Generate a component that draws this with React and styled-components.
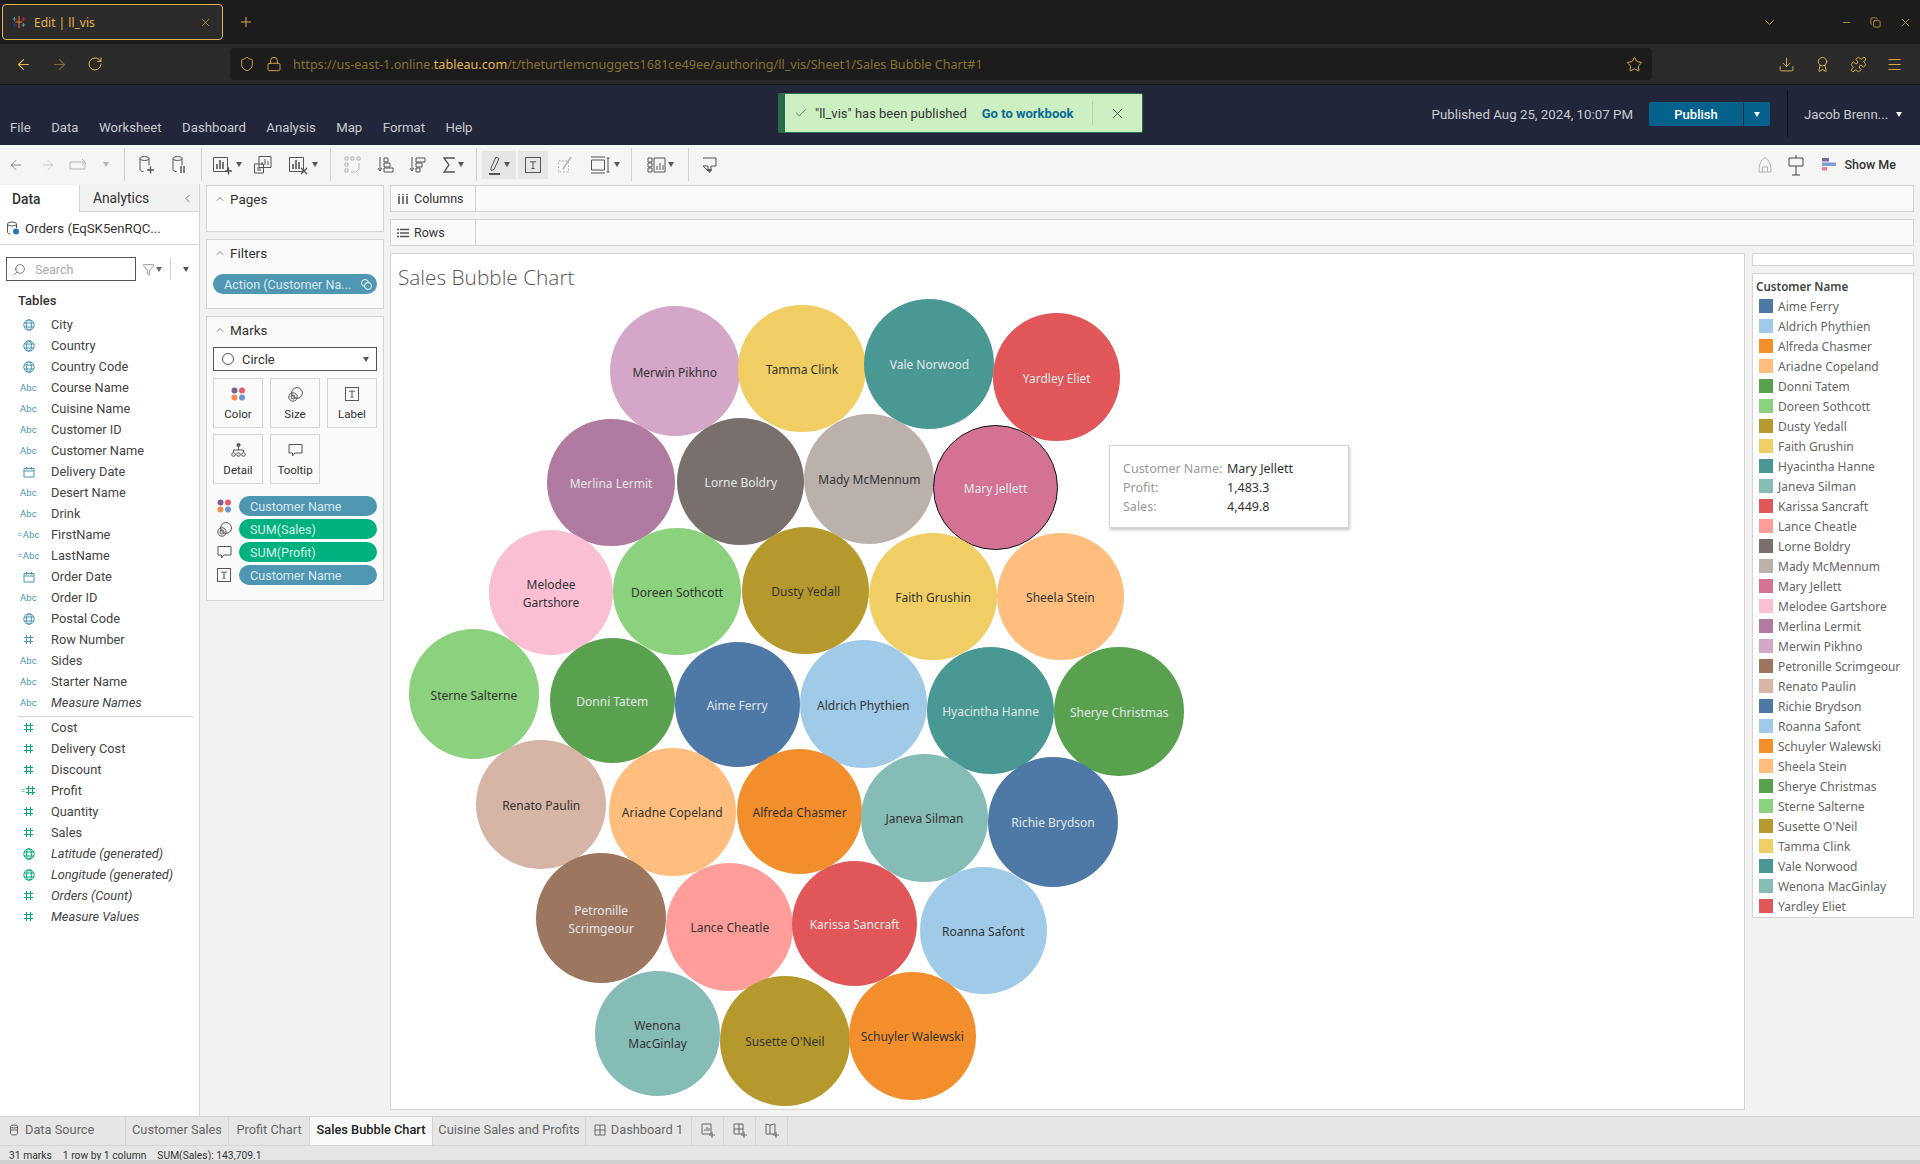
import React from 'react';
import styled, { createGlobalStyle } from 'styled-components';
import { ArrowLeft, ArrowRight, RotateCw, Shield, Lock, Star, Download, X, Plus, ChevronDown, ChevronUp, ChevronLeft, Minus, Copy, Menu, Puzzle, Check, Search as SearchIcon, Filter, Award } from 'lucide-react';

const AMBER = '#e6b44c';
const UI_FONT = 'Roboto, "Liberation Sans", sans-serif';
const VIZ_FONT = '"Noto Sans", "Open Sans", sans-serif';

const GlobalStyle = createGlobalStyle`
  html, body { margin: 0; padding: 0; background: #f2f2f2; }
  body { font-family: ${UI_FONT}; overflow: hidden; }
  * { box-sizing: border-box; }
`;

const COLORS = ['#4e79a7', '#a0cbe8', '#f28e2b', '#ffbe7d', '#59a14f', '#8cd17d', '#b6992d', '#f1ce63', '#499894', '#86bcb6', '#e15759', '#ff9d9a', '#79706e', '#bab0ac', '#d37295', '#fabfd2', '#b07aa1', '#d4a6c8', '#9d7660', '#d7b5a6'];

const LEGEND = ['Aime Ferry', 'Aldrich Phythien', 'Alfreda Chasmer', 'Ariadne Copeland', 'Donni Tatem', 'Doreen Sothcott', 'Dusty Yedall', 'Faith Grushin', 'Hyacintha Hanne', 'Janeva Silman', 'Karissa Sancraft', 'Lance Cheatle', 'Lorne Boldry', 'Mady McMennum', 'Mary Jellett', 'Melodee Gartshore', 'Merlina Lermit', 'Merwin Pikhno', 'Petronille Scrimgeour', 'Renato Paulin', 'Richie Brydson', 'Roanna Safont', 'Schuyler Walewski', 'Sheela Stein', 'Sherye Christmas', 'Sterne Salterne', "Susette O'Neil", 'Tamma Clink', 'Vale Norwood', 'Wenona MacGinlay', 'Yardley Eliet'];

// these three labels break over two lines in the chart
const TWO_LINES = ['Melodee Gartshore', 'Petronille Scrimgeour', 'Wenona MacGinlay'];

// centre x, centre y, radius, in page pixels of the shrunk reference
const BUBBLES = [
  ['Merwin Pikhno', 551, 303, 53, 0], ['Tamma Clink', 655, 301, 52, 0], ['Vale Norwood', 759, 297, 53, 1], ['Yardley Eliet', 863, 308, 52, 1],
  ['Merlina Lermit', 499, 394, 52, 1], ['Lorne Boldry', 605, 393, 52, 1], ['Mady McMennum', 710, 391, 53, 0], ['Mary Jellett', 813, 398, 51, 1],
  ['Melodee Gartshore', 450, 484, 51, 0], ['Doreen Sothcott', 553, 483, 52, 0], ['Dusty Yedall', 658, 482, 52, 0], ['Faith Grushin', 762, 487, 52, 0], ['Sheela Stein', 866, 487, 52, 0],
  ['Sterne Salterne', 387, 567, 53, 0], ['Donni Tatem', 500, 572, 51, 1], ['Aime Ferry', 602, 575, 51, 1], ['Aldrich Phythien', 705, 575, 52, 0], ['Hyacintha Hanne', 809, 580, 52, 1], ['Sherye Christmas', 914, 581, 53, 1],
  ['Renato Paulin', 442, 657, 53, 0], ['Ariadne Copeland', 549, 663, 52, 0], ['Alfreda Chasmer', 653, 663, 51, 0], ['Janeva Silman', 755, 668, 52, 0], ['Richie Brydson', 860, 671, 53, 1],
  ['Petronille Scrimgeour', 491, 750, 53, 1], ['Lance Cheatle', 596, 757, 52, 0], ['Karissa Sancraft', 698, 754, 51, 1], ['Roanna Safont', 803, 760, 52, 0],
  ['Wenona MacGinlay', 537, 844, 51, 0], ["Susette O'Neil", 641, 850, 53, 0], ['Schuyler Walewski', 745, 846, 52, 0],
];

const DIMS = [
  ['geo', 'City'], ['geo', 'Country'], ['geo', 'Country Code'], ['abc', 'Course Name'], ['abc', 'Cuisine Name'], ['abc', 'Customer ID'], ['abc', 'Customer Name'],
  ['date', 'Delivery Date'], ['abc', 'Desert Name'], ['abc', 'Drink'], ['calcabc', 'FirstName'], ['calcabc', 'LastName'], ['date', 'Order Date'], ['abc', 'Order ID'],
  ['geo', 'Postal Code'], ['hash', 'Row Number'], ['abc', 'Sides'], ['abc', 'Starter Name'], ['abc', 'Measure Names', true],
];
const MEASURES = [
  ['hash', 'Cost'], ['hash', 'Delivery Cost'], ['hash', 'Discount'], ['calchash', 'Profit'], ['hash', 'Quantity'], ['hash', 'Sales'],
  ['geo', 'Latitude (generated)', true], ['geo', 'Longitude (generated)', true], ['hash', 'Orders (Count)', true], ['hash', 'Measure Values', true],
];

/* ---------- browser chrome ---------- */
const TabStrip = styled.div`
  height: 44px; background: #1c1c1c; display: flex; align-items: center; padding: 0 0 0 2px; color: ${AMBER};
`;
const BrowserTab = styled.div`
  width: 221px; height: 36px; border: 1px solid ${AMBER}; border-radius: 4px; background: #2b2b2b;
  display: flex; align-items: center; padding: 0 10px 0 8px; font: 12px ${VIZ_FONT}; gap: 7px; color: ${AMBER};
  span { flex: 1; }
`;
const NewTab = styled.div` margin-left: 15px; display: flex; `;
const WindowControls = styled.div`
  margin-left: auto; display: flex; align-items: center; padding-right: 8px;
`;
const WinIcon = styled.span` display: flex; margin-left: ${p => p.$ml}px; `;
const NavBar = styled.div`
  height: 41px; background: #2b2b2b; display: flex; align-items: center; padding: 0 0 0 15px; color: ${AMBER}; border-bottom: 1px solid #111;
`;
const NavIcon = styled.span` display: flex; margin-left: ${p => p.$ml || 0}px; opacity: ${p => p.$dim ? 0.45 : 1}; `;
const UrlBar = styled.div`
  margin-left: 127px; width: 1422px; height: 32px; background: #1c1c1c; border-radius: 4px; display: flex; align-items: center; padding: 0 9px; color: ${AMBER};
`;
const UrlText = styled.div`
  margin-left: 11px; flex: 1; font: 12.6px ${VIZ_FONT}; color: #86712f; white-space: nowrap; overflow: hidden;
  b { font-weight: 400; color: ${AMBER}; }
`;

/* ---------- tableau header ---------- */
const AppHeader = styled.div`
  position: relative; height: 60px; background: #22263a; display: flex; align-items: flex-end; color: #d0d0d6;
`;
const MenuBar = styled.div`
  display: flex; gap: 20.5px; padding: 0 0 8px 10px; font-size: 13.2px; line-height: 18px; color: #c9cbd2;
`;
const Toast = styled.div`
  position: absolute; left: 778px; top: 8px; width: 365px; height: 40px; background: #ccf0c2; border: 1px solid #2a6b4a; border-left-width: 7px; border-radius: 2px;
  display: flex; align-items: center; padding-left: 9px; font-size: 13px; color: #333;
`;
const ToastText = styled.span` margin-left: 7px; `;
const ToastLink = styled.span` margin-left: 15px; color: #0a6a95; font-weight: 700; `;
const ToastClose = styled.span`
  margin-left: 18px; padding-left: 16px; border-left: 1px solid #b5d4ad; height: 24px; display: flex; align-items: center; color: #444;
`;
const HeaderRight = styled.div`
  margin-left: auto; height: 60px; display: flex; align-items: center; padding-bottom: 2px;
`;
const PublishedText = styled.div` font-size: 13.3px; color: #c9cbd2; margin-right: 16px; `;
const PublishBtn = styled.div`
  width: 121px; height: 24px; background: #05628d; border-radius: 2px; display: flex; align-items: center; color: #fff; font-size: 13px; font-weight: 500;
`;
const PublishLabel = styled.div` width: 94px; text-align: center; `;
const PublishCaret = styled.div`
  flex: 1; border-left: 1px solid #22263a; height: 24px; display: flex; align-items: center; justify-content: center;
`;
const Tri = styled.span`
  display: inline-block; flex: none; width: 0; height: 0; border-left: 3.5px solid transparent; border-right: 3.5px solid transparent; border-top: 5px solid ${p => p.$c || '#fff'};
`;
const UserBox = styled.div`
  margin-left: 17px; width: 133px; height: 46px; border-left: 1px solid #111; display: flex; align-items: center; padding-left: 16px; gap: 8px; font-size: 13.2px; color: #c9cbd2;
`;

/* ---------- toolbar ---------- */
const Toolbar = styled.div`
  height: 39px; background: #f5f5f5; display: flex; align-items: center; padding-left: 2px; color: #555;
`;
const ToolBtn = styled.div`
  flex: none; width: ${p => p.$w || 32}px; height: 28px; display: flex; align-items: center; justify-content: center; gap: 2px;
  background: ${p => p.$active ? '#e6e6e6' : 'transparent'};
  opacity: ${p => p.$dim ? 0.4 : 1}; margin-right: ${p => p.$mr || 0}px;
`;
const ToolSep = styled.div` flex: none; width: 1px; height: 33px; background: #d4d4d4; margin: 0 5px; `;
const ShowMe = styled.div`
  margin-left: auto; display: flex; align-items: center; padding-right: 24px; font-size: 12.5px; font-weight: 500; color: #333;
`;
const ShowMeBars = styled.svg` margin-right: 6px; `;

/* ---------- workspace ---------- */
const Workspace = styled.div` flex: 1; display: flex; min-height: 0; background: #f2f2f2; `;
const Sidebar = styled.div` width: 200px; background: #fff; border-right: 1px solid #d4d4d4; display: flex; flex-direction: column; `;
const PaneTabs = styled.div` height: 28px; display: flex; background: #f2f2f2; font-size: 13.8px; color: #333; border-top: 1px solid #f2f2f2; `;
const PaneTab = styled.div`
  width: ${p => p.$w}px; display: flex; align-items: center; padding-left: ${p => p.$pl}px; font-weight: ${p => p.$on ? 500 : 400};
  background: ${p => p.$on ? '#fff' : '#f2f2f2'};
  border-bottom: ${p => p.$on ? 'none' : '1px solid #d4d4d4'};
  border-left: ${p => p.$on ? 'none' : '1px solid #d4d4d4'};
  flex: ${p => p.$on ? 'none' : 1};
  justify-content: space-between; padding-right: 5px;
`;
const SourceRow = styled.div`
  height: 33px; border-bottom: 1px solid #d4d4d4; display: flex; align-items: center; padding-left: 6px; gap: 5px; font-size: 13.2px; color: #333;
`;
const SearchRow = styled.div` display: flex; align-items: center; padding: 12px 0 0 6px; color: #555; `;
const SearchBox = styled.div`
  width: 130px; height: 24px; border: 1px solid #555; display: flex; align-items: center; padding-left: 6px; gap: 9px; font-size: 12.5px; color: #aaa;
`;
const SearchTools = styled.div` display: flex; align-items: center; margin-left: 6px; gap: 1px; `;
const SearchSep = styled.div` width: 1px; height: 22px; background: #d4d4d4; margin: 0 11px 0 7px; `;
const TablesTitle = styled.div` padding-left: 18px; margin-top: 10px; font-size: 13px; font-weight: 500; line-height: 20px; color: #333; `;
const FieldList = styled.div` margin-top: 3px; display: flex; flex-direction: column; `;
const FieldRow = styled.div`
  height: 21px; display: flex; align-items: center; padding-left: 18px; font-size: 12.8px; color: #444; font-style: ${p => p.$it ? 'italic' : 'normal'};
  white-space: nowrap;
`;
const FieldGlyph = styled.span`
  width: 21px; margin-right: 12px; display: flex; align-items: center; justify-content: center; font-size: 9.5px; font-style: normal; color: #4996b2; letter-spacing: .2px;
`;
const CalcMark = styled.span` font-size: 8px; color: ${p => p.$c}; `;
const FieldDivider = styled.div` margin: 3px 6px 0 18px; height: 1px; background: #d4d4d4; `;

/* ---------- cards ---------- */
const CardColumn = styled.div` width: 190px; padding: 1px 6px 0; display: flex; flex-direction: column; gap: 7px; `;
const Card = styled.div`
  height: ${p => p.$h}px; background: #fafafa; border: 1px solid #d4d4d4; padding: 0 6px;
`;
const CardTitle = styled.div`
  height: 26px; display: flex; align-items: center; gap: 4px; font-size: 13.5px; color: #333; padding-left: 1px;
`;
const Pill = styled.div`
  flex: 1; height: 20px; border-radius: 10px; background: ${p => p.$green ? '#00b180' : '#4f96b3'}; color: ${p => p.$green ? '#d5f2e8' : '#d8eaf0'}; font-size: 12.6px; padding: 0 5px 0 11px;
  display: flex; align-items: center; justify-content: space-between; white-space: nowrap;
`;
const FilterPillWrap = styled.div` margin-top: 8px; display: flex; `;
const MarkSelect = styled.div`
  margin-top: 4px; height: 24px; background: #fff; border: 1px solid #555; display: flex; align-items: center; padding: 0 7px 0 8px; gap: 8px; font-size: 13px; color: #333;
`;
const MarkRing = styled.div` width: 12px; height: 12px; border: 1px solid #555; border-radius: 50%; `;
const MarkName = styled.div` flex: 1; `;
const MarkGrid = styled.div` margin-top: 7px; display: grid; grid-template-columns: repeat(3, 50px); gap: 6px 7px; `;
const MarkBtn = styled.div`
  height: 50px; background: #fafafa; border: 1px solid #d4d4d4; display: flex; flex-direction: column; align-items: center; justify-content: space-between; padding: 8px 0 6px; font-size: 11.5px; color: #333;
`;
const ShelfList = styled.div` margin-top: 12px; display: flex; flex-direction: column; gap: 3px; `;
const ShelfRow = styled.div` display: flex; align-items: center; `;
const ShelfGlyph = styled.span` width: 26px; display: flex; justify-content: flex-start; padding-left: 4px; color: #555; `;

/* ---------- main ---------- */
const Main = styled.div` flex: 1; min-width: 0; padding: 1px 6px 6px 0; display: flex; flex-direction: column; gap: 7px; `;
const Shelf = styled.div` height: 27px; background: #fafafa; border: 1px solid #d4d4d4; display: flex; `;
const ShelfLabel = styled.div`
  width: 85px; border-right: 1px solid #d4d4d4; display: flex; align-items: center; padding-left: 6px; gap: 5px; font-size: 12.5px; color: #333;
`;
const VizRow = styled.div` flex: 1; min-height: 0; display: flex; gap: 7px; `;
const Canvas = styled.div` position: relative; flex: 1; background: #fff; border: 1px solid #d4d4d4; overflow: hidden; `;
const SheetTitle = styled.div`
  padding: 10px 0 0 7px; font: 300 20.8px/26px "Open Sans", sans-serif; color: #555;
`;
const Bubble = styled.div`
  position: absolute; border-radius: 50%; display: flex; align-items: center; justify-content: center; text-align: center;
  padding-top: 3px; font: 12px/18px ${VIZ_FONT}; white-space: pre; color: ${p => p.$light ? '#e2e8e8' : '#333'};
  border: ${p => p.$sel ? '1.5px solid #111' : 'none'};
`;
const Tip = styled.div`
  position: absolute; left: 718px; top: 191px; width: 240px; height: 83px; background: #fff; border: 1px solid #d4d4d4; box-shadow: 1px 2px 3px rgba(0,0,0,.22);
  padding: 13px; display: grid; grid-template-columns: 104px 1fr; grid-auto-rows: 19px; align-items: center; font: 12.5px ${VIZ_FONT}; color: #333;
`;
const TipLabel = styled.div` color: #999; `;
const LegendCol = styled.div` width: 162px; display: flex; flex-direction: column; gap: 7px; `;
const LegendTop = styled.div` height: 13px; background: #fff; border: 1px solid #d4d4d4; `;
const LegendBox = styled.div` height: 645px; background: #fff; border: 1px solid #d4d4d4; padding: 3px 0 0 3px; font-family: ${VIZ_FONT}; `;
const LegendTitle = styled.div` height: 20px; font-size: 11.6px; font-weight: 600; line-height: 20px; color: #444; margin-bottom: -1px; `;
const LegendRow = styled.div` height: 20px; display: flex; align-items: center; padding-left: 3px; gap: 5px; font-size: 12px; color: #666; white-space: nowrap; `;
const Swatch = styled.i` width: 14px; height: 14px; background: ${p => p.$c}; `;

/* ---------- bottom ---------- */
const SheetTabs = styled.div` height: 30px; background: #e6e6e6; border-top: 1px solid #d4d4d4; border-bottom: 1px solid #d4d4d4; display: flex; `;
const SheetTab = styled.div`
  width: ${p => p.$w}px; display: flex; align-items: center; justify-content: ${p => p.$left ? 'flex-start' : 'center'}; gap: 5px; font-size: 12.8px; white-space: nowrap;
  padding: 0 0 3px ${p => p.$left ? 8 : 0}px;
  color: ${p => p.$on ? '#222' : '#666'}; font-weight: ${p => p.$on ? 500 : 400};
  background: ${p => p.$on ? '#fafafa' : 'transparent'}; border-right: 1px solid #d4d4d4;
`;
const StatusBar = styled.div`
  height: 14px; background: #e6e6e6; display: flex; align-items: center; padding: 4px 0 0 9px; gap: 11px; font-size: 10.3px; color: #333;
`;
const StatusEdge = styled.div` height: 4px; background: #cfcfcf; `;
const Page = styled.div` width: 1920px; height: 1164px; display: flex; flex-direction: column; overflow: hidden; `;

/* ---------- drawings ---------- */
const Svg = ({ s = 16, w, h, children, c = 'currentColor', sw = 1 }) => (
  <svg width={w || s} height={h || s} viewBox={`0 0 ${w || s} ${h || s}`} fill="none" stroke={c} strokeWidth={sw}>{children}</svg>
);

const TabLogo = () => (
  <svg width="16" height="16" viewBox="0 0 16 16" strokeWidth="1.1" fill="none">
    <path d="M8 2v12M4.500 8h7" stroke="#e8762b" />
    <path d="M3.500 3v4M1.500 5h4" stroke="#5b879b" />
    <path d="M12.500 3v4M10.500 5h4" stroke="#c72035" />
    <path d="M3.500 9v4M1.500 11h4" stroke="#1f447e" />
    <path d="M12.500 9v4M10.500 11h4" stroke="#59879b" />
  </svg>
);
const Cyl = ({ children }) => (
  <Svg s={20} c="#555"><ellipse cx="7.500" cy="3.500" rx="4.500" ry="2" /><path d="M3 3.500v11c0 1 1.500 2 3.500 2M12 3.500v7" />{children}</Svg>
);
const Chart = ({ children }) => (
  <Svg s={22} c="#555"><path d="M1.500 3.500h14v14h-14z" /><path d="M5 15V10M8 15V6M11 15V8" strokeWidth="1.600" />{children}</Svg>
);
const TBox = ({ s = 16 }) => (
  <Svg s={s} c="#555"><rect x=".5" y=".5" width={s - 1} height={s - 1} /><path d={`M${s * .3} ${s * .3}h${s * .4}M${s / 2} ${s * .3}v${s * .42}M${s * .4} ${s * .72}h${s * .2}`} /></Svg>
);
const ColorDots = () => (
  <svg width="15" height="14" viewBox="0 0 15 14"><circle cx="3.500" cy="3.500" r="3" fill="#7b6193" /><circle cx="11" cy="3.500" r="3" fill="#ea5a6b" /><circle cx="3.500" cy="10.500" r="3" fill="#f28e4f" /><circle cx="11" cy="10.500" r="3" fill="#6f96cf" /></svg>
);
const SizeIcon = () => (
  <Svg s={15} c="#555"><circle cx="9" cy="6" r="5.400" /><circle cx="5" cy="10" r="4.200" /><circle cx="5" cy="10" r="2" /></Svg>
);
const BubbleIcon = () => (
  <Svg s={15} c="#555"><path d="M1 1.500h13v8.500H7l-2.500 3V10H1z" /></Svg>
);
const DetailIcon = () => (
  <Svg s={15} c="#555"><circle cx="7.500" cy="2" r="1.600" fill="#555" /><path d="M7.500 4v3M2.500 9V7h10v2" /><circle cx="2.500" cy="11.500" r="1.800" /><circle cx="7.500" cy="11.500" r="1.800" /><circle cx="12.500" cy="11.500" r="1.800" /></Svg>
);
const Globe = ({ c }) => (
  <Svg s={12} c={c}><circle cx="6" cy="6" r="5.200" /><ellipse cx="6" cy="6" rx="2.400" ry="5.200" /><path d="M1 4h10M1 8h10" /></Svg>
);
const Cal = () => (
  <Svg s={12} c="#4996b2"><path d="M1 2.500h10v8.500H1zM1 5h10M3.500 1v2.500M8.500 1v2.500" /></Svg>
);
const Hash = ({ c }) => (
  <Svg s={11} c={c}><path d="M3.500 1v9M7.500 1v9M1 3.500h9M1 7.500h9" /></Svg>
);

const fieldGlyph = (type, green) => {
  const c = green ? '#00a878' : '#4996b2';
  if (type === 'geo') return <Globe c={c} />;
  if (type === 'date') return <Cal />;
  if (type === 'hash') return <Hash c={c} />;
  if (type === 'calchash') return <><CalcMark $c={c}>=</CalcMark><Hash c={c} /></>;
  if (type === 'calcabc') return '=Abc';
  return 'Abc';
};

const Field = ({ item, green }) => (
  <FieldRow $it={item[2]}>
    <FieldGlyph>{fieldGlyph(item[0], green)}</FieldGlyph>
    {item[1]}
  </FieldRow>
);

const S = 1920 / 1568;
const CANVAS_X = 391;
const CANVAS_Y = 254;

function App() {
  return (
    <Page>
      <GlobalStyle />
      <TabStrip>
        <BrowserTab><TabLogo /><span>Edit | ll_vis</span><X size={13} strokeWidth={1.2} /></BrowserTab>
        <NewTab><Plus size={16} strokeWidth={1.4} /></NewTab>
        <WindowControls>
          <WinIcon><ChevronDown size={15} strokeWidth={1.4} /></WinIcon>
          <WinIcon $ml={64}><Minus size={11} strokeWidth={1.5} /></WinIcon>
          <WinIcon $ml={18}><Copy size={11} strokeWidth={1.5} /></WinIcon>
          <WinIcon $ml={18}><X size={13} strokeWidth={1.3} /></WinIcon>
        </WindowControls>
      </TabStrip>

      <NavBar>
        <NavIcon><ArrowLeft size={17} strokeWidth={1.5} /></NavIcon>
        <NavIcon $ml={19} $dim><ArrowRight size={17} strokeWidth={1.5} /></NavIcon>
        <NavIcon $ml={19}><RotateCw size={16} strokeWidth={1.5} /></NavIcon>
        <UrlBar>
          <Shield size={16} strokeWidth={1.3} />
          <NavIcon $ml={11}><Lock size={16} strokeWidth={1.3} /></NavIcon>
          <UrlText>https://us-east-1.online.<b>tableau.com</b>/t/theturtlemcnuggets1681ce49ee/authoring/ll_vis/Sheet1/Sales Bubble Chart#1</UrlText>
          <Star size={17} strokeWidth={1.3} />
        </UrlBar>
        <NavIcon $ml={126}><Download size={17} strokeWidth={1.3} /></NavIcon>
        <NavIcon $ml={19}><Award size={17} strokeWidth={1.3} /></NavIcon>
        <NavIcon $ml={19}><Puzzle size={17} strokeWidth={1.3} /></NavIcon>
        <NavIcon $ml={19}><Menu size={17} strokeWidth={1.3} /></NavIcon>
      </NavBar>

      <AppHeader>
        <MenuBar>
          {['File', 'Data', 'Worksheet', 'Dashboard', 'Analysis', 'Map', 'Format', 'Help'].map(m => <span key={m}>{m}</span>)}
        </MenuBar>
        <Toast>
          <Check size={14} strokeWidth={1.3} color="#2a6b4a" />
          <ToastText>"ll_vis" has been published</ToastText>
          <ToastLink>Go to workbook</ToastLink>
          <ToastClose><X size={17} strokeWidth={1.2} /></ToastClose>
        </Toast>
        <HeaderRight>
          <PublishedText>Published Aug 25, 2024, 10:07 PM</PublishedText>
          <PublishBtn><PublishLabel>Publish</PublishLabel><PublishCaret><Tri /></PublishCaret></PublishBtn>
          <UserBox>Jacob Brenn...<Tri /></UserBox>
        </HeaderRight>
      </AppHeader>

      <Toolbar>
        <ToolBtn $w={28}><ArrowLeft size={16} strokeWidth={1} /></ToolBtn>
        <ToolBtn $w={36} $dim><ArrowRight size={16} strokeWidth={1} /></ToolBtn>
        <ToolBtn $w={26} $dim><Svg w={20} h={14} c="#555"><path d="M1 4h15v7H1zM13 1l3 3-3 3" /></Svg></ToolBtn>
        <ToolBtn $w={27} $dim><Tri $c="#555" /></ToolBtn>
        <ToolSep />
        <ToolBtn $w={34}><Cyl><path d="M10 15h7M13.500 11.500v7" strokeWidth="1.400" /></Cyl></ToolBtn>
        <ToolBtn $w={32}><Cyl><path d="M11 11v7M14 11v7" strokeWidth="1.400" /></Cyl></ToolBtn>
        <ToolSep />
        <ToolBtn $w={40}><Chart><path d="M13 17h7M16.500 13.500v7" strokeWidth="1.400" /></Chart><Tri $c="#555" /></ToolBtn>
        <ToolBtn $w={34}><Svg s={22} c="#555"><path d="M6 2.500h12v11H6zM9 11V8M12 11V5M15 11V7M1.500 10h9v9h-9zM4 16h4M4 14h4" /></Svg></ToolBtn>
        <ToolBtn $w={44}><Chart><path d="M13 14l6 6M19 14l-6 6" strokeWidth="1.400" /></Chart><Tri $c="#555" /></ToolBtn>
        <ToolSep />
        <ToolBtn $w={34} $dim><Svg s={20} c="#555"><path d="M2 2h3v3H2zM8 2h3v3H8zM14 2h3v3h-3zM2 8h3v3H2zM2 14h3v3H2zM16 8v6l-3 3M8 17h4" /></Svg></ToolBtn>
        <ToolBtn $w={31}><Svg s={20} c="#555"><path d="M4 2v14M2 13l2 3 2-3M8 3h4v4H8zM8 8h6v4H8zM8 13h9v4H8z" /></Svg></ToolBtn>
        <ToolBtn $w={33}><Svg s={20} c="#555"><path d="M4 2v14M2 13l2 3 2-3M8 3h9v4H8zM8 8h6v4H8zM8 13h4v4H8z" /></Svg></ToolBtn>
        <ToolBtn $w={37}><Svg w={14} h={18} c="#555" sw={1.3}><path d="M12 3V2H2l5 7-5 7h10v-1" /></Svg><Tri $c="#555" /></ToolBtn>
        <ToolSep />
        <ToolBtn $w={34} $active $mr={2}><Svg w={14} h={20} c="#555"><path d="M3 13L8 2l3 1.500-5 11-3 1z" /><path d="M1 19h11" strokeWidth="2" /></Svg><Tri $c="#555" /></ToolBtn>
        <ToolBtn $w={30} $active><TBox s={16} /></ToolBtn>
        <ToolBtn $w={36} $dim><Svg s={18} c="#555"><path d="M1.500 5h10v11h-10z" strokeDasharray="2 1.500" /><path d="M6 13L14 1" strokeWidth="1.500" /></Svg></ToolBtn>
        <ToolBtn $w={42}><Svg w={22} h={20} c="#555"><path d="M1 2h14M1 18h14M1.500 5h13v10h-13zM18 3v14M16.500 3h3M16.500 17h3" /></Svg><Tri $c="#555" /></ToolBtn>
        <ToolSep />
        <ToolBtn $w={46}><Svg s={20} c="#555"><path d="M2 3h4v4H2zM2 8h4v4H2zM2 13h4v4H2zM8 3h11v14H8zM11 15v-4M14 15V8M17 15v-5" /></Svg><Tri $c="#555" /></ToolBtn>
        <ToolSep />
        <ToolBtn $w={32}><Svg s={18} c="#555"><path d="M2 2h13v8H10v5M7 15V10H2z" /><path d="M6.500 13.500l2 3 2-3z" fill="#555" /></Svg></ToolBtn>
        <ShowMe>
          <ToolBtn $w={32} $dim><Svg s={18} c="#555"><path d="M9 1.500C6 3 3.500 7 3 13v3h12v-3c-.5-6-3-9.500-6-11.500zM6.500 16v-5h5v5" /></Svg></ToolBtn>
          <ToolBtn $w={30} $mr={11}><Svg w={18} h={22} c="#444"><path d="M2 4h14v8H2zM9 1v3M9 12v9M5 21h8" /></Svg></ToolBtn>
          <ShowMeBars width="16" height="16" viewBox="0 0 16 16">
            <rect x="0" y="1" width="7" height="3.500" fill="#7b6a9a" />
            <rect x="0" y="5.500" width="14" height="3.500" fill="#7f9fd6" />
            <rect x="0" y="10" width="5" height="3.500" fill="#f27f85" />
          </ShowMeBars>
          Show Me
        </ShowMe>
      </Toolbar>

      <Workspace>
        <Sidebar>
          <PaneTabs>
            <PaneTab $on $w={79} $pl={12}>Data</PaneTab>
            <PaneTab $w={120} $pl={13}>Analytics<ChevronLeft size={13} strokeWidth={1.2} /></PaneTab>
          </PaneTabs>
          <SourceRow>
            <Svg s={14} c="#555"><ellipse cx="6" cy="3" rx="4.500" ry="2" /><path d="M1.500 3v8c0 1 1 2 3 2M10.500 3v4" /><circle cx="10" cy="10.500" r="3" fill="#1f77b4" stroke="none" /></Svg>
            Orders (EqSK5enRQC...
          </SourceRow>
          <SearchRow>
            <SearchBox><SearchIcon size={13} strokeWidth={1.3} color="#444" style={{ transform: 'scaleX(-1)' }} />Search</SearchBox>
            <SearchTools>
              <Filter size={13} strokeWidth={1.1} /><Tri $c="#666" />
              <SearchSep />
              <Tri $c="#555" />
            </SearchTools>
          </SearchRow>
          <TablesTitle>Tables</TablesTitle>
          <FieldList>
            {DIMS.map(f => <Field key={f[1]} item={f} />)}
            <FieldDivider />
            {MEASURES.map(f => <Field key={f[1]} item={f} green />)}
          </FieldList>
        </Sidebar>

        <CardColumn>
          <Card $h={47}><CardTitle><ChevronUp size={12} strokeWidth={1.2} />Pages</CardTitle></Card>
          <Card $h={70}>
            <CardTitle><ChevronUp size={12} strokeWidth={1.2} />Filters</CardTitle>
            <FilterPillWrap>
              <Pill>Action (Customer Na...<Svg s={11} c="#fff"><circle cx="4" cy="4" r="3.500" /><circle cx="7" cy="7" r="3.500" fill="#4f96b3" /></Svg></Pill>
            </FilterPillWrap>
          </Card>
          <Card $h={285}>
            <CardTitle><ChevronUp size={12} strokeWidth={1.2} />Marks</CardTitle>
            <MarkSelect><MarkRing /><MarkName>Circle</MarkName><Tri $c="#555" /></MarkSelect>
            <MarkGrid>
              <MarkBtn><ColorDots />Color</MarkBtn>
              <MarkBtn><SizeIcon />Size</MarkBtn>
              <MarkBtn><TBox s={14} />Label</MarkBtn>
              <MarkBtn><DetailIcon />Detail</MarkBtn>
              <MarkBtn><BubbleIcon />Tooltip</MarkBtn>
            </MarkGrid>
            <ShelfList>
              <ShelfRow><ShelfGlyph><ColorDots /></ShelfGlyph><Pill>Customer Name</Pill></ShelfRow>
              <ShelfRow><ShelfGlyph><SizeIcon /></ShelfGlyph><Pill $green>SUM(Sales)</Pill></ShelfRow>
              <ShelfRow><ShelfGlyph><BubbleIcon /></ShelfGlyph><Pill $green>SUM(Profit)</Pill></ShelfRow>
              <ShelfRow><ShelfGlyph><TBox s={14} /></ShelfGlyph><Pill>Customer Name</Pill></ShelfRow>
            </ShelfList>
          </Card>
        </CardColumn>

        <Main>
          <Shelf>
            <ShelfLabel><Svg s={12} c="#555" sw={1.6}><path d="M2 3v8M6 3v8M10 3v8M2 1v1M6 1v1M10 1v1" /></Svg>Columns</ShelfLabel>
          </Shelf>
          <Shelf>
            <ShelfLabel><Svg s={12} c="#555" sw={1.4}><path d="M3 2.500h9M3 6h9M3 9.500h9M0 2.500h2M0 6h2M0 9.500h2" /></Svg>Rows</ShelfLabel>
          </Shelf>
          <VizRow>
            <Canvas>
              <SheetTitle>Sales Bubble Chart</SheetTitle>
              {BUBBLES.map(([name, x, y, r, light]) => (
                <Bubble
                  key={name}
                  $light={light}
                  $sel={name === 'Mary Jellett'}
                  style={{
                    left: x * S - r * S - CANVAS_X,
                    top: y * S - r * S - CANVAS_Y,
                    width: 2 * r * S,
                    height: 2 * r * S,
                    background: COLORS[LEGEND.indexOf(name) % COLORS.length],
                  }}
                >
                  {TWO_LINES.includes(name) ? name.replace(' ', '\n') : name}
                </Bubble>
              ))}
              <Tip>
                <TipLabel>Customer Name:</TipLabel><div>Mary Jellett</div>
                <TipLabel>Profit:</TipLabel><div>1,483.3</div>
                <TipLabel>Sales:</TipLabel><div>4,449.8</div>
              </Tip>
            </Canvas>
            <LegendCol>
              <LegendTop />
              <LegendBox>
                <LegendTitle>Customer Name</LegendTitle>
                {LEGEND.map((n, i) => (
                  <LegendRow key={n}><Swatch $c={COLORS[i % COLORS.length]} />{n}</LegendRow>
                ))}
              </LegendBox>
            </LegendCol>
          </VizRow>
        </Main>
      </Workspace>

      <SheetTabs>
        <SheetTab $w={126} $left><Svg s={12} c="#666"><ellipse cx="6" cy="2.500" rx="3.500" ry="1.500" /><path d="M2.500 2.500v7c0 2 7 2 7 0v-7M2.500 6h7" /></Svg>Data Source</SheetTab>
        <SheetTab $w={103}>Customer Sales</SheetTab>
        <SheetTab $w={81}>Profit Chart</SheetTab>
        <SheetTab $w={123} $on>Sales Bubble Chart</SheetTab>
        <SheetTab $w={153}>Cuisine Sales and Profits</SheetTab>
        <SheetTab $w={106}><Svg s={12} c="#666"><path d="M1 1h10v10H1zM6 1v10M1 6h10" /></Svg>Dashboard 1</SheetTab>
        <SheetTab $w={32}><Svg s={16} c="#666"><path d="M2 2h9v10H2zM5 9V7M7 9V5M9 9V6M9 13h6M12 10v6" /></Svg></SheetTab>
        <SheetTab $w={32}><Svg s={16} c="#666"><path d="M2 2h9v10H2zM7 2v10M2 7h9M9 13h6M12 10v6" /></Svg></SheetTab>
        <SheetTab $w={32}><Svg s={16} c="#666"><path d="M2 2l4 1 5-1v10H6l-4 0zM6 3v9M9 13h6M12 10v6" /></Svg></SheetTab>
      </SheetTabs>
      <StatusBar>
        <span>31 marks</span><span>1 row by 1 column</span><span>SUM(Sales): 143,709.1</span>
      </StatusBar>
      <StatusEdge />
    </Page>
  );
}

export default App;
